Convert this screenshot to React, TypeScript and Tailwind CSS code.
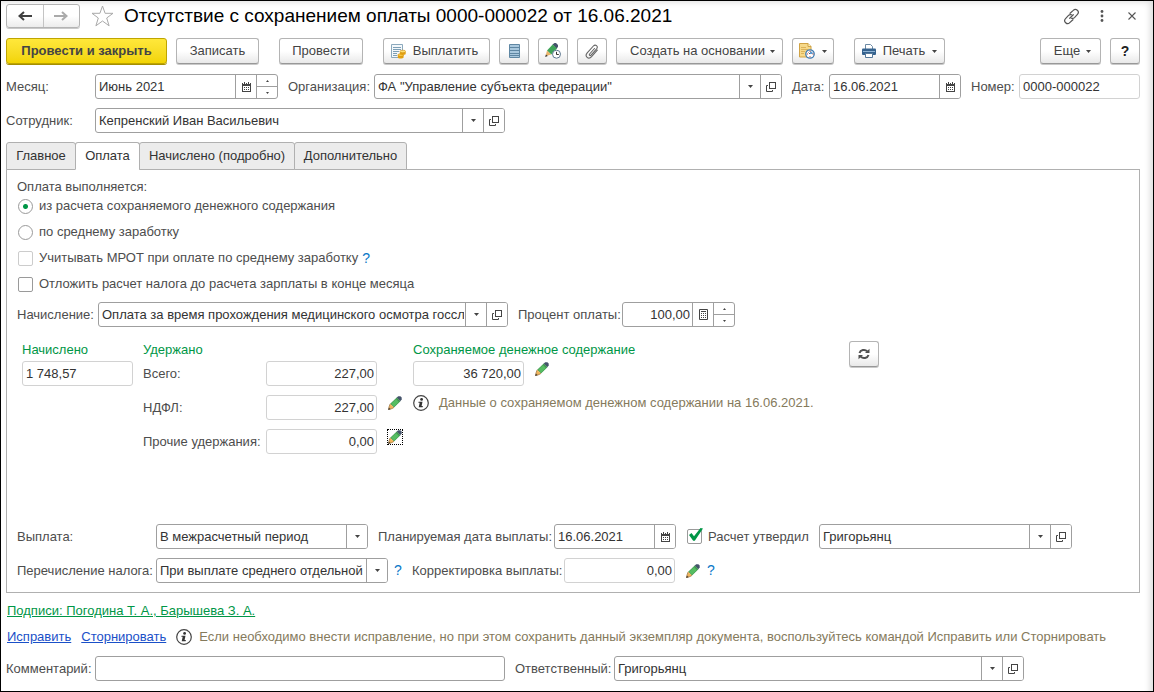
import React, { useId, useState } from "react";

const fieldBox =
  "flex h-[25px] shrink-0 rounded-[3px] border border-[#9f9f9f] bg-white overflow-hidden";
const cell =
  "flex w-[21px] shrink-0 items-center justify-center border-l border-[#9f9f9f] bg-white text-[#404040]";
const textInput =
  "min-w-0 flex-1 bg-transparent pr-[2px] pl-[3px] text-[#333333] outline-none";
const toolButton =
  "flex h-[26px] shrink-0 items-center justify-center rounded-[3px] border border-[#b4b4b4] border-b-[#989898] bg-linear-to-b from-white from-50% to-[#e9e9e9] text-[#444444] shadow-[0_1px_0_#c9c9c9]";

function ArrowDown() {
  return (
    <svg width="5" height="3" viewBox="0 0 5 3" aria-hidden="true">
      <path d="M0 0h5L2.5 3z" fill="#444" />
    </svg>
  );
}

function OpenIcon() {
  return (
    <svg width="10" height="10" viewBox="0 0 10 10" fill="none" stroke="#444" aria-hidden="true">
      <rect x="3.5" y="0.5" width="6" height="6" />
      <path d="M2 3.5H0.5V9.5H6.5V8" />
    </svg>
  );
}

function CalendarIcon() {
  return (
    <svg width="9" height="10" viewBox="0 0 9 10" aria-hidden="true">
      <path d="M0 1h9v9H0z" fill="#444" />
      <path d="M1 4h7v5H1z" fill="#fff" />
      <path d="M1 0h3v2H1zM5 0h3v2H5z" fill="#fff" />
      <path d="M2 0h1v2H2zM6 0h1v2H6z" fill="#444" />
      <path d="M2 5h1v1H2zM4 5h1v1H4zM6 5h1v1H6zM2 7h1v1H2zM4 7h1v1H4zM6 7h1v1H6z" fill="#444" />
    </svg>
  );
}

function CalculatorIcon() {
  return (
    <svg width="9" height="11" viewBox="0 0 9 11" aria-hidden="true">
      <path d="M.5.5h8v10h-8z" fill="#fff" stroke="#444" />
      <path d="M2 2h5v1H2zM2 4h1v1H2zM4 4h1v1H4zM6 4h1v1H6zM2 6h1v1H2zM4 6h1v1H4zM6 6h1v1H6zM2 8h1v1H2zM4 8h1v1H4zM6 8h1v1H6z" fill="#444" />
    </svg>
  );
}

function PencilIcon() {
  return (
    <svg className="shrink-0" width="14" height="14" viewBox="0 0 14 14" aria-hidden="true">
      <path d="M8.600 1.800L10.200.3h2.200L13.700 1.600v2L12.200 5.200z" fill="#45536b" />
      <path d="M8.800 1.600l3.600 3.600L6 11.400 2.200 7.800z" fill="#3f9450" />
      <path d="M8 3l3 3-5 4.800-3-3z" fill="#56bd62" />
      <path d="M2.200 7.800L6 11.400l-2 1.200L.6 13.500 1.400 10z" fill="#f0b35a" />
      <path d="M2.200 7.800L1.300 10 .5 13.500 4 12.600 6 11.400" fill="none" stroke="#9a7038" strokeWidth=".7" />
      <path d="M.2 13.900l.6-2.400 1.900 1.800z" fill="#4a4036" />
    </svg>
  );
}

function InfoIcon() {
  return (
    <svg className="shrink-0" width="16" height="16" viewBox="0 0 16 16" aria-hidden="true">
      <circle cx="8" cy="8" r="7.300" fill="#fff" stroke="#444" strokeWidth="1.200" />
      <circle cx="8.600" cy="4.400" r="1.400" fill="#333" />
      <path d="M5.600 6.700h3.900L8.600 11.100h1.300l-.3 1.100H5.700l1-4.400H5.300z" fill="#333" />
    </svg>
  );
}

function Spinner({ label }: { label: string }) {
  return (
    <div className="flex w-[21px] shrink-0 flex-col border-l border-[#9f9f9f]">
      <button type="button" aria-label={`${label}: больше`} className="flex flex-1 items-center justify-center">
        <svg width="3" height="2" viewBox="0 0 3 2" aria-hidden="true">
          <path d="M0 2h3L1.500 0z" fill="#444" />
        </svg>
      </button>
      <button
        type="button"
        aria-label={`${label}: меньше`}
        className="flex flex-1 items-center justify-center border-t border-[#9f9f9f]"
      >
        <svg width="3" height="2" viewBox="0 0 3 2" aria-hidden="true">
          <path d="M0 0h3L1.500 2z" fill="#444" />
        </svg>
      </button>
    </div>
  );
}

type FieldProps = {
  label: string;
  labelClass: string;
  boxClass: string;
  value: string;
};

function SelectBox({
  id,
  name,
  boxClass,
  value,
  open,
}: {
  id?: string;
  name: string;
  boxClass: string;
  value: string;
  open?: boolean;
}) {
  return (
    <div className={`${fieldBox} ${boxClass}`}>
      <div className="relative min-w-0 flex-1">
        <select
          id={id}
          aria-label={id ? undefined : name}
          className="h-full w-full appearance-none bg-transparent pr-[22px] pl-[3px] text-clip text-[#333333] outline-none"
        >
          <option>{value}</option>
        </select>
        <span className={`pointer-events-none absolute inset-y-0 right-0 ${cell}`}>
          <ArrowDown />
        </span>
      </div>
      {open && (
        <button type="button" aria-label={`${name} открыть`} className={cell}>
          <OpenIcon />
        </button>
      )}
    </div>
  );
}

function SelectField({ label, labelClass, boxClass, value, open }: FieldProps & { open?: boolean }) {
  const id = useId();
  return (
    <>
      <label htmlFor={id} className={`shrink-0 whitespace-nowrap ${labelClass}`}>
        {label}
      </label>
      <SelectBox id={id} name={label} boxClass={boxClass} value={value} open={open} />
    </>
  );
}

function InputField({
  label,
  labelClass,
  boxClass,
  value,
  calendar,
  calculator,
  spin,
  right,
}: FieldProps & { calendar?: boolean; calculator?: boolean; spin?: boolean; right?: boolean }) {
  const id = useId();
  return (
    <>
      <label htmlFor={id} className={`shrink-0 whitespace-nowrap ${labelClass}`}>
        {label}
      </label>
      <div className={`${fieldBox} ${boxClass}`}>
        <input id={id} defaultValue={value} className={`${textInput} ${right ? "text-right" : ""}`} />
        {calendar && (
          <button type="button" aria-label={`${label} календарь`} className={cell}>
            <CalendarIcon />
          </button>
        )}
        {calculator && (
          <button type="button" aria-label={`${label} калькулятор`} className={cell}>
            <CalculatorIcon />
          </button>
        )}
        {spin && <Spinner label={label} />}
      </div>
    </>
  );
}

function ReadOnly({
  id,
  label,
  value,
  className,
}: {
  id?: string;
  label?: string;
  value: string;
  className: string;
}) {
  return (
    <input
      id={id}
      aria-label={label}
      readOnly
      value={value}
      className={`h-[25px] shrink-0 rounded-[3px] border border-[#d2d2d2] bg-white pr-[2px] pl-[3px] text-[#333333] outline-none ${className}`}
    />
  );
}

function EditButton({ label, focused }: { label: string; focused?: boolean }) {
  return (
    <button
      type="button"
      aria-label={label}
      className={`flex size-4 shrink-0 items-center justify-center border ${
        focused ? "border-dotted border-black" : "border-transparent"
      }`}
    >
      <PencilIcon />
    </button>
  );
}

function Help() {
  return (
    <button type="button" aria-label="Справка" className="shrink-0 text-[#0a78c8]">
      <span className="text-[14px]">?</span>
    </button>
  );
}

function Header() {
  return (
    <header className="flex h-6 items-center">
      <div className="flex h-6 w-[74px] shrink-0 rounded-[3px] border border-[#b4b4b4] bg-linear-to-b from-white from-50% to-[#ececec] shadow-[0_1px_0_#c9c9c9]">
        <button type="button" aria-label="Назад" className="flex flex-1 items-center justify-center">
          <svg width="14" height="10" viewBox="0 0 14 10" aria-hidden="true">
            <path d="M14 5H3" stroke="#404040" strokeWidth="2" />
            <path d="M6 1L1.500 5L6 9" fill="none" stroke="#404040" strokeWidth="2" />
          </svg>
        </button>
        <button
          type="button"
          aria-label="Вперед"
          className="flex flex-1 items-center justify-center border-l border-[#c4c4c4]"
        >
          <svg width="14" height="10" viewBox="0 0 14 10" aria-hidden="true">
            <path d="M0 5h11" stroke="#aaaaaa" strokeWidth="2" />
            <path d="M8 1l4.500 4L8 9" fill="none" stroke="#aaaaaa" strokeWidth="2" />
          </svg>
        </button>
      </div>
      <button type="button" aria-label="В избранное" className="ml-[11px] shrink-0">
        <svg width="23" height="22" viewBox="0 0 23 22" fill="#fff" stroke="#a9a9a9" aria-hidden="true">
          <path d="M11.500 1l2.600 7.300h7.900l-6.300 4.700 2.400 7.800-6.600-4.800-6.600 4.800L7.300 13 1 8.300h7.900z" />
        </svg>
      </button>
      <h1 className="ml-[10px] min-w-0 truncate text-[19px] leading-6 text-black">
        Отсутствие с сохранением оплаты 0000-000022 от 16.06.2021
      </h1>
      <div className="ml-auto flex shrink-0 items-center text-[#555555]">
        <button type="button" aria-label="Получить ссылку" className="mr-5">
          <svg width="17" height="17" viewBox="0 0 24 24" fill="none" stroke="currentColor" strokeWidth="1.700" strokeLinecap="round" aria-hidden="true">
            <path d="M10 7.500L14.500 3.300a4 4 0 0 1 5.900 5.600l-4.200 4.600a4 4 0 0 1-4.200 1" />
            <path d="M14 16.500l-4.500 4.200a4 4 0 0 1-5.900-5.600l4.200-4.600a4 4 0 0 1 4.200-1" />
            <path d="M9.500 14.500l5-5" />
          </svg>
        </button>
        <button type="button" aria-label="Меню" className="mr-6">
          <svg width="4" height="12" viewBox="0 0 4 12" fill="#555" aria-hidden="true">
            <circle cx="2" cy="1.500" r="1.400" />
            <circle cx="2" cy="6" r="1.400" />
            <circle cx="2" cy="10.500" r="1.400" />
          </svg>
        </button>
        <button type="button" aria-label="Закрыть" className="mr-1">
          <svg width="8" height="8" viewBox="0 0 8 8" stroke="#555" strokeWidth="1.100" aria-hidden="true">
            <path d="M.5.5l7 7M7.500.5l-7 7" />
          </svg>
        </button>
      </div>
    </header>
  );
}

function Toolbar() {
  return (
    <div className="mt-[10px] flex gap-5">
      <div className="flex gap-[9px]">
        <button
          type="button"
          className="flex h-[26px] w-[161px] shrink-0 items-center justify-center rounded-[3px] border border-[#bfa500] bg-linear-to-b from-[#ffe83a] to-[#f2d400] font-bold text-[#444444] shadow-[0_1px_0_#a58f00]"
        >
          Провести и закрыть
        </button>
        <button type="button" className={`${toolButton} w-[83px]`}>
          Записать
        </button>
      </div>
      <button type="button" className={`${toolButton} w-[84px]`}>
        Провести
      </button>
      <div className="flex gap-[9px]">
        <button type="button" className={`${toolButton} w-[107px] gap-[7px] pr-1`}>
          <svg width="15" height="15" viewBox="0 0 15 15" aria-hidden="true">
            <path d="M.5.5h11v13H.5z" fill="#f4f8fb" stroke="#8ba9bd" />
            <path d="M2 3.500h8M2 5.500h8M2 7.500h6M2 9.500h4M2 11.500h4" stroke="#7c9fb6" />
            <path d="M6.800 11v2.500c0 1.200 5 1.400 5.800 0V11z" fill="#e3a010" />
            <ellipse cx="9.700" cy="11" rx="2.900" ry="1.300" fill="#ffd24a" stroke="#c98a10" strokeWidth=".6" />
            <path d="M8.900 7.500V10c0 1.200 5 1.200 5.800 0V7.500z" fill="#e3a010" />
            <ellipse cx="11.800" cy="7.500" rx="2.900" ry="1.300" fill="#ffdf70" stroke="#c98a10" strokeWidth=".6" />
          </svg>
          Выплатить
        </button>
        <button type="button" aria-label="Реестр" className={`${toolButton} w-[30px]`}>
          <svg width="11" height="14" viewBox="0 0 11 14" aria-hidden="true">
            <path d="M.5.5h10v13H.5z" fill="#a9c8de" stroke="#5f87a3" />
            <path d="M1 3.500h9M1 6.500h9M1 9.500h9M1 11.500h9" stroke="#5f87a3" />
          </svg>
        </button>
        <button type="button" aria-label="Изменить период" className={`${toolButton} w-[30px]`}>
          <svg width="16" height="16" viewBox="0 0 16 16" aria-hidden="true">
            <path d="M7.500 1.500L9.500 0h1.500L13 2v1.800L11.500 6z" fill="#45536b" />
            <path d="M7.700 1.400l4.200 4.200L6.200 11.400 2 7.500z" fill="#3fa458" />
            <path d="M2 7.500l4.200 3.900-3.500 1.200L.5 13.500z" fill="#e9b36a" />
            <path d="M.2 13.900l.7-2.500 1.900 1.600z" fill="#333" />
            <circle cx="11.500" cy="11.200" r="4" fill="#fff" stroke="#5e7890" />
            <path d="M11.500 8.800v2.700h2.300" fill="none" stroke="#333" />
          </svg>
        </button>
        <button type="button" aria-label="Присоединенные файлы" className={`${toolButton} w-[30px]`}>
          <svg width="14" height="15" viewBox="0 0 14 15" fill="none" stroke="#666" strokeWidth="1.100" strokeLinecap="round" aria-hidden="true">
            <path d="M9.500 4.500L4.600 10c-.9 1 .5 2.200 1.400 1.200l5.600-6.400c2-2.500-1.200-5-3.200-2.800L2.200 8.800c-3 3.600 1.300 7.300 4.400 3.900l5.700-6.500" />
          </svg>
        </button>
        <button type="button" className={`${toolButton} w-[167px] gap-[5px] pl-[6px]`}>
          Создать на основании
          <ArrowDown />
        </button>
        <button type="button" aria-label="Отложенные" className={`${toolButton} w-[42px] gap-[7px]`}>
          <svg width="16" height="16" viewBox="0 0 16 16" aria-hidden="true">
            <path d="M.5.500h8.500l3 3v10.500H.5z" fill="#f6d98a" stroke="#d0a345" />
            <path d="M9 .5v3h3" fill="#fff3c8" stroke="#d0a345" />
            <path d="M2 4.500h5M2 6.500h7M2 8.500h4M2 10.500h3" stroke="#dcb35a" />
            <circle cx="11" cy="11" r="4.200" fill="#fff" stroke="#3d7ab0" strokeWidth="1.300" />
            <path d="M11 11V8.200A2.800 2.800 0 0 1 13.800 11z" fill="#5b9ad0" />
            <path d="M11 14.200v-1M7.900 11h1M13.500 11h1M11 7.800v1" stroke="#c0392b" />
            <path d="M11 11l-1.500-1.500" stroke="#333" strokeWidth=".8" />
          </svg>
          <ArrowDown />
        </button>
      </div>
      <button type="button" className={`${toolButton} w-[91px] gap-[7px]`}>
        <svg width="14" height="14" viewBox="0 0 14 14" aria-hidden="true">
          <path d="M3.500.5h5l2 2V6h-7z" fill="#fff" stroke="#6c8aa5" />
          <rect x="0" y="4.500" width="14" height="6.500" rx="1" fill="#35628e" />
          <path d="M1 7.500h12" stroke="#8fb3d3" />
          <path d="M3.500 9.500h7v4h-7z" fill="#fff" stroke="#55789a" />
        </svg>
        Печать
        <ArrowDown />
      </button>
      <div className="ml-auto flex gap-[9px]">
        <button type="button" className={`${toolButton} w-[61px] gap-[6px] pl-1`}>
          Еще
          <ArrowDown />
        </button>
        <button type="button" className={`${toolButton} w-[30px]`}>
          <span className="text-[14px] font-bold text-[#222222]">?</span>
        </button>
      </div>
    </div>
  );
}

function Tabs() {
  const tabs = [
    { name: "Главное", width: "w-[70px]" },
    { name: "Оплата", width: "w-[65px]" },
    { name: "Начислено (подробно)", width: "w-[156px]" },
    { name: "Дополнительно", width: "w-[113px]" },
  ];
  return (
    <div role="tablist" className="relative z-10 -mb-px mt-[9px] flex">
      {tabs.map((tab, i) => (
        <button
          key={tab.name}
          type="button"
          role="tab"
          aria-selected={i === 1}
          className={`-mr-px h-7 rounded-t-[3px] border border-[#b0b0b0] whitespace-nowrap text-[#333333] ${tab.width} ${
            i === 1 ? "border-b-white bg-white" : "bg-[#ececec]"
          }`}
        >
          {tab.name}
        </button>
      ))}
    </div>
  );
}

function PaymentBasis() {
  const [basis, setBasis] = useState(0);
  const options = ["из расчета сохраняемого денежного содержания", "по среднему заработку"];
  return (
    <fieldset>
      <legend className="h-[14px] leading-4">Оплата выполняется:</legend>
      {options.map((text, i) => (
        <label key={text} className="flex h-[26px] w-fit items-center gap-[6px] pl-px">
          <input
            type="radio"
            name="basis"
            checked={basis === i}
            onChange={() => setBasis(i)}
            className="size-[15px] appearance-none rounded-full border border-[#9a9a9a] bg-white checked:bg-[radial-gradient(circle,#009646_2px,white_3px)]"
          />
          {text}
        </label>
      ))}
      <div className="flex h-[26px] items-center gap-1">
        <label className="flex items-center gap-[6px] pl-px">
          <input type="checkbox" disabled className="size-[15px] appearance-none rounded-[2px] border border-[#cccccc] bg-white" />
          Учитывать МРОТ при оплате по среднему заработку
        </label>
        <Help />
      </div>
      <label className="flex h-[26px] w-fit items-center gap-[6px] pl-px">
        <input type="checkbox" className="size-[15px] appearance-none rounded-[2px] border border-[#9a9a9a] bg-white checked:bg-[#009646]" />
        Отложить расчет налога до расчета зарплаты в конце месяца
      </label>
    </fieldset>
  );
}

function Summary() {
  const heading = "h-[14px] leading-[14px] whitespace-nowrap text-[#009646]";
  const rows = [
    { id: "total", label: "Всего:", value: "227,00" },
    { id: "ndfl", label: "НДФЛ:", value: "227,00", edit: true },
    { id: "other", label: "Прочие удержания:", value: "0,00", edit: true, focused: true },
  ];
  return (
    <div className="mt-[14px] flex items-start gap-[10px] pl-[5px]">
      <div className="flex flex-col gap-1 pt-[2px]">
        <div className={heading}>Начислено</div>
        <ReadOnly label="Начислено" value="1 748,57" className="w-[111px]" />
      </div>
      <div className="flex flex-col gap-1 pt-[2px]">
        <div className={heading}>Удержано</div>
        <div className="flex flex-col gap-[9px]">
          {rows.map((row) => (
            <div key={row.id} className="flex w-[260px] items-start">
              <label htmlFor={row.id} className="w-[123px] shrink-0 leading-[25px] whitespace-nowrap">
                {row.label}
              </label>
              <ReadOnly id={row.id} value={row.value} className="mr-[10px] w-[111px] text-right" />
              {row.edit && <EditButton label={`Изменить ${row.label}`} focused={row.focused} />}
            </div>
          ))}
        </div>
      </div>
      <div className="flex w-[426px] flex-col gap-1 pt-[2px]">
        <div className={heading}>Сохраняемое денежное содержание</div>
        <div className="flex flex-col gap-[9px]">
          <div className="flex items-start gap-[10px]">
            <ReadOnly label="Сохраняемое денежное содержание" value="36 720,00" className="w-[111px] text-right" />
            <EditButton label="Изменить содержание" />
          </div>
          <div className="flex h-4 items-center gap-[10px] text-[#857a5c]">
            <InfoIcon />
            <span className="whitespace-nowrap">Данные о сохраняемом денежном содержании на 16.06.2021.</span>
          </div>
        </div>
      </div>
      <button type="button" aria-label="Обновить" className={`${toolButton} w-[30px]`}>
        <svg width="12" height="12" viewBox="0 0 12 12" fill="none" stroke="#505050" strokeWidth="2" aria-hidden="true">
          <path d="M1.500 5A4.500 4 0 0 1 9.300 3.400" />
          <path d="M10.500 7A4.500 4 0 0 1 2.700 8.600" />
          <path d="M11.500.8V5H7z" fill="#505050" stroke="none" />
          <path d="M.5 11.200V7H5z" fill="#505050" stroke="none" />
        </svg>
      </button>
    </div>
  );
}

function Payout() {
  const [approved, setApproved] = useState(true);
  return (
    <div className="mt-auto flex flex-col gap-[9px] pt-5">
      <div className="flex items-center">
        <SelectField label="Выплата:" labelClass="w-[139px]" boxClass="w-[212px]" value="В межрасчетный период" />
        <InputField
          label="Планируемая дата выплаты:"
          labelClass="ml-[10px] w-[176px]"
          boxClass="w-[122px]"
          value="16.06.2021"
          calendar
        />
        <label className="ml-[11px] flex w-[132px] shrink-0 items-center gap-[6px] whitespace-nowrap">
          <span className="relative flex size-[15px]">
            <input
              type="checkbox"
              checked={approved}
              onChange={() => setApproved(!approved)}
              className="size-[15px] appearance-none rounded-[2px] border border-[#9a9a9a] bg-white"
            />
            {approved && (
              <svg className="pointer-events-none absolute bottom-[3px] left-[2px]" width="14" height="13" viewBox="0 0 14 13" aria-hidden="true">
                <path d="M0 7l2.500-2L5 8.200 11.500 0 14 .4 5.800 12.800H4.200z" fill="#009646" />
              </svg>
            )}
          </span>
          Расчет утвердил
        </label>
        <SelectBox name="Расчет утвердил" boxClass="w-[253px]" value="Григорьянц" open />
      </div>
      <div className="flex items-center">
        <SelectField
          label="Перечисление налога:"
          labelClass="w-[139px]"
          boxClass="w-[232px]"
          value="При выплате среднего отдельной"
        />
        <div className="flex w-6 shrink-0 pl-[6px]">
          <Help />
        </div>
        <label htmlFor="correction" className="w-[152px] shrink-0 whitespace-nowrap">
          Корректировка выплаты:
        </label>
        <ReadOnly id="correction" value="0,00" className="mr-[10px] w-[111px] text-right" />
        <EditButton label="Изменить корректировку" />
        <div className="flex pl-[6px]">
          <Help />
        </div>
      </div>
    </div>
  );
}

export default function App() {
  return (
    <div className="flex min-h-screen min-w-[1100px] flex-col border border-black bg-white pt-[3px] pr-[13px] pb-[10px] pl-[5px] font-['Liberation_Sans',Arial,sans-serif] text-[13px] leading-4 text-[#4d4d4d] shadow-[inset_-6px_4px_6px_-3px_#dddddd]">
      <Header />
      <Toolbar />

      <div className="mt-[10px] flex items-center">
        <InputField label="Месяц:" labelClass="w-[89px]" boxClass="w-[183px]" value="Июнь 2021" calendar spin />
        <SelectField
          label="Организация:"
          labelClass="ml-[10px] w-[86px]"
          boxClass="min-w-0 flex-1"
          value='ФА "Управление субъекта федерации"'
          open
        />
        <InputField label="Дата:" labelClass="ml-[10px] w-[37px]" boxClass="w-[132px]" value="16.06.2021" calendar />
        <label htmlFor="number" className="ml-[10px] w-12 shrink-0">
          Номер:
        </label>
        <ReadOnly id="number" value="0000-000022" className="w-[121px]" />
      </div>
      <div className="mt-[9px] flex items-center">
        <SelectField label="Сотрудник:" labelClass="w-[89px]" boxClass="w-[410px]" value="Кепренский Иван Васильевич" open />
      </div>

      <Tabs />
      <main role="tabpanel" className="flex flex-1 flex-col border border-[#b0b0b0] bg-white px-[10px] py-[9px]">
        <PaymentBasis />
        <div className="mt-[5px] flex items-center">
          <SelectField
            label="Начисление:"
            labelClass="w-[81px]"
            boxClass="w-[410px]"
            value="Оплата за время прохождения медицинского осмотра госслужащим"
            open
          />
          <InputField
            label="Процент оплаты:"
            labelClass="ml-[10px] w-[104px]"
            boxClass="w-[113px]"
            value="100,00"
            calculator
            spin
            right
          />
        </div>
        <Summary />
        <Payout />
      </main>

      <a href="#signatures" className="mt-[10px] ml-px w-fit text-[#009646] underline">
        Подписи: Погодина Т. А., Барышева З. А.
      </a>
      <div className="mt-[10px] ml-px flex h-4 items-center">
        <a href="#correct" className="text-[#1a50c8] underline">
          Исправить
        </a>
        <a href="#reverse" className="ml-[10px] text-[#1a50c8] underline">
          Сторнировать
        </a>
        <div className="ml-[10px] flex items-center gap-[7px] text-[#857a5c]">
          <InfoIcon />
          <span>
            Если необходимо внести исправление, но при этом сохранить данный экземпляр документа, воспользуйтесь командой
            Исправить или Сторнировать
          </span>
        </div>
      </div>
      <div className="mt-[11px] flex items-center">
        <InputField label="Комментарий:" labelClass="w-[89px]" boxClass="w-[410px]" value="" />
        <SelectField label="Ответственный:" labelClass="ml-[10px] w-[99px]" boxClass="w-[410px]" value="Григорьянц" open />
      </div>
    </div>
  );
}
